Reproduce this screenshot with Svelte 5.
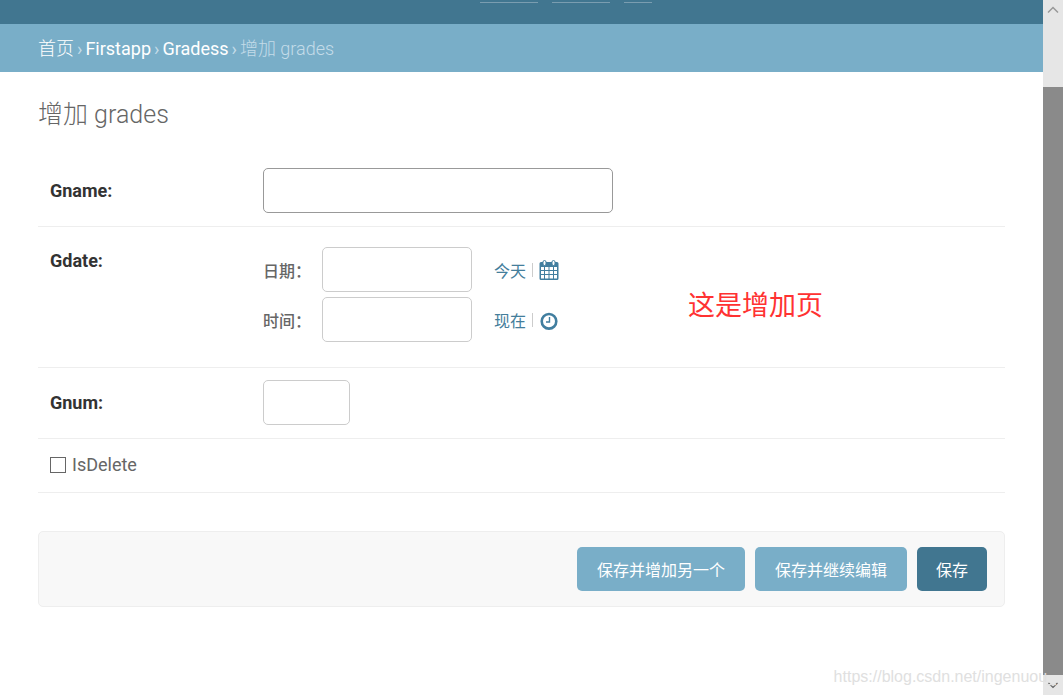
<script lang="ts">
  let gname = $state('');
  let date = $state('');
  let time = $state('');
  let gnum = $state('');
  let isDelete = $state(false);

  function today() {
    date = new Date().toISOString().slice(0, 10);
  }

  function now() {
    time = new Date().toTimeString().slice(0, 8);
  }
</script>

<div class="window">
  <div class="page">
    <header class="header">
      <span class="underline"></span>
      <span class="underline"></span>
      <span class="underline short"></span>
    </header>

    <nav class="breadcrumbs">
      <a class="home" href="#home">首页</a>
      <i>›</i>
      <a href="#app">Firstapp</a>
      <i>›</i>
      <a href="#gradess">Gradess</a>
      <i>›</i>
      <span>增加 grades</span>
    </nav>

    <main class="content">
      <h1>增加 grades</h1>
      <form onsubmit={(e) => e.preventDefault()}>
        <div class="row">
          <label class="name" for="gname">Gname:</label>
          <input id="gname" class="wide active" type="text" bind:value={gname} />
        </div>

        <div class="row dates">
          <span class="name">Gdate:</span>
          <div class="datetime">
            <div class="line">
              <label for="gdate">日期：</label>
              <input id="gdate" class="medium" type="text" bind:value={date} />
              <span class="shortcuts">
                <button type="button" onclick={today}>今天</button>
                <i class="bar"></i>
                <button type="button" aria-label="日历">
                  <svg width="20" height="20" viewBox="0 0 20 20">
                    <path fill="#417e9f" fill-rule="evenodd" d="M2 2h16a1.500 1.500 0 0 1 1.500 1.500V18.500A1.500 1.500 0 0 1 18 20H2a1.500 1.500 0 0 1-1.500-1.500V3.500A1.500 1.500 0 0 1 2 2ZM2 7v3h3V7Zm4 0v3h3.500V7Zm4.500 0v3H14V7ZM15 7v3h3V7ZM2 11v3h3v-3Zm4 0v3h3.500v-3Zm4.500 0v3H14v-3Zm4.500 0v3h3v-3ZM2 15v3.500h3V15Zm4 0v3.500h3.500V15Zm4.500 0v3.500H14V15Zm4.500 0v3.500h3V15Z" />
                    <rect x="4" y="0.500" width="3" height="5" rx="1.500" fill="#fff" stroke="#417e9f" />
                    <rect x="13" y="0.500" width="3" height="5" rx="1.500" fill="#fff" stroke="#417e9f" />
                  </svg>
                </button>
              </span>
            </div>
            <div class="line">
              <label for="gtime">时间：</label>
              <input id="gtime" class="medium" type="text" bind:value={time} />
              <span class="shortcuts">
                <button type="button" onclick={now}>现在</button>
                <i class="bar"></i>
                <button type="button" aria-label="时钟">
                  <svg width="20" height="20" viewBox="0 0 20 20">
                    <circle cx="10" cy="11.300" r="7.300" fill="none" stroke="#417e9f" stroke-width="2.600" />
                    <path d="M10.500 7V12H7" fill="none" stroke="#417e9f" stroke-width="1.400" />
                  </svg>
                </button>
              </span>
            </div>
          </div>
          <p class="note">这是增加页</p>
        </div>

        <div class="row">
          <label class="name" for="gnum">Gnum:</label>
          <input id="gnum" class="small" type="text" bind:value={gnum} />
        </div>

        <div class="row check">
          <input id="isdelete" type="checkbox" bind:checked={isDelete} />
          <label for="isdelete">IsDelete</label>
        </div>

        <div class="submit">
          <button type="submit">保存并增加另一个</button>
          <button type="submit">保存并继续编辑</button>
          <button type="submit" class="default">保存</button>
        </div>
      </form>
    </main>
  </div>

  <div class="scrollbar">
    <svg width="20" height="20" viewBox="0 0 20 20"><path d="M5 12.500 10 7.500 15 12.500" fill="none" stroke="#999" stroke-width="1.500" /></svg>
    <div class="thumb"></div>
    <svg width="20" height="20" viewBox="0 0 20 20"><path d="M5.500 8 10 12.500 14.500 8" fill="none" stroke="#606060" stroke-width="1.200" /></svg>
  </div>

  <div class="watermark">https://blog.csdn.net/ingenuou_</div>
</div>

<style>
  :global(body) {
    margin: 0;
    background: #fff;
  }

  .window {
    position: relative;
    display: grid;
    grid-template-columns: minmax(0, 1fr) 20px;
    min-height: 100vh;
    color: #666;
    font-family: Roboto, "Noto Sans CJK SC", sans-serif;
    font-size: 18px;
  }

  .header {
    display: flex;
    justify-content: flex-end;
    gap: 14px;
    height: 24px;
    padding-right: 391px;
    background: #417690;
    box-sizing: border-box;
  }

  .underline {
    width: 58px;
    height: 1px;
    margin-top: 2px;
    background: #7a9db0;
  }

  .underline.short {
    width: 28px;
  }

  .breadcrumbs {
    display: flex;
    gap: 3px;
    padding: 1px 38px 0;
    background: #79aec8;
    color: #c4dce8;
    line-height: 47px;
    white-space: nowrap;
  }

  .breadcrumbs a {
    color: #fff;
    text-decoration: none;
    font-weight: 400;
  }

  .breadcrumbs i {
    font-style: normal;
  }

  .breadcrumbs a.home,
  .breadcrumbs span {
    font-weight: 300;
  }

  .content {
    padding: 25px 38px 40px;
  }

  h1 {
    margin: 0 0 23px;
    font-size: 25px;
    line-height: 36px;
    font-weight: 300;
  }

  .row {
    display: flex;
    align-items: center;
    padding: 12px 12px 13px;
    border-bottom: 1px solid #eee;
  }

  .name {
    width: 213px;
    color: #333;
    font-weight: 700;
    line-height: 24px;
  }

  input[type='text'] {
    box-sizing: border-box;
    height: 45px;
    margin: 0;
    padding: 6px 8px;
    border: 1px solid #ccc;
    border-radius: 5px;
    outline: none;
    background: #fff;
    font: inherit;
  }

  .wide {
    width: 350px;
  }

  input.active {
    border-color: #999;
  }

  .medium {
    width: 150px;
  }

  .small {
    width: 87px;
  }

  .dates {
    align-items: flex-start;
    padding: 20px 12px 25px;
  }

  .dates .name {
    line-height: 28px;
  }

  .datetime {
    display: grid;
    gap: 5px;
  }

  .line {
    display: flex;
    align-items: center;
  }

  .line label {
    width: 59px;
    font-size: 16px;
    font-weight: 500;
    white-space: nowrap;
  }

  .shortcuts {
    display: flex;
    align-items: center;
    gap: 6px;
    margin-left: 22px;
  }

  .shortcuts button {
    display: block;
    padding: 0;
    border: 0;
    background: none;
    color: #447e9b;
    font: inherit;
    font-size: 16px;
    cursor: pointer;
  }

  .shortcuts svg {
    display: block;
  }

  .bar {
    width: 1px;
    height: 14px;
    background: #ccc;
  }

  .note {
    margin: 39px 0 0 129px;
    color: #ff3232;
    font-size: 27px;
    line-height: 40px;
    white-space: nowrap;
  }

  .check {
    gap: 6px;
    padding: 13px 12px 14px;
    line-height: 26px;
  }

  .check input {
    appearance: none;
    box-sizing: border-box;
    width: 16px;
    height: 16px;
    margin: 0;
    border: 1px solid #666;
    background: #fff;
  }

  .check input:checked {
    background: #417690;
  }

  .submit {
    display: flex;
    justify-content: flex-end;
    gap: 10px;
    margin-top: 38px;
    padding: 15px 17px;
    border: 1px solid #eee;
    border-radius: 5px;
    background: #f8f8f8;
  }

  .submit button {
    height: 44px;
    padding: 0 20px;
    border: 0;
    border-radius: 5px;
    background: #79aec8;
    color: #fff;
    font: inherit;
    font-size: 16px;
    cursor: pointer;
  }

  .submit .default {
    padding: 0 19px;
    background: #417690;
  }

  .scrollbar {
    display: flex;
    flex-direction: column;
    background: #e6e6e6;
  }

  .scrollbar svg {
    display: block;
    flex: none;
  }

  .thumb {
    flex: 1;
    margin-top: 67px;
    background: #8a8a8a;
  }

  .watermark {
    position: absolute;
    right: 7px;
    bottom: 8px;
    color: #e0e0e0;
    font-family: "Liberation Sans", sans-serif;
    font-size: 16px;
    line-height: 20px;
    pointer-events: none;
  }
</style>
